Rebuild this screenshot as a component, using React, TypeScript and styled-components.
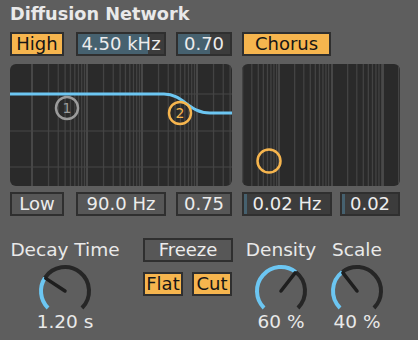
import styled, { createGlobalStyle } from "styled-components";

const Global = createGlobalStyle`
  body {
    margin: 0;
    background: #5e5e5e;
  }
`;

const ORANGE = "#f6b54e";
const BLUE = "#6cc6f2";

const Root = styled.div`
  width: 418px;
  height: 340px;
  box-sizing: border-box;
  padding: 2px 10px 0;
  background: #5e5e5e;
  font-family: "DejaVu Sans", "Liberation Sans", sans-serif;
  color: #e9e9e9;
  overflow: hidden;
`;

const Title = styled.div`
  font-size: 17.7px;
  font-weight: bold;
  line-height: 24px;
  height: 24px;
`;

const Main = styled.div`
  display: flex;
  gap: 10px;
  margin-top: 6px;
`;

const Column = styled.div<{ $w: number }>`
  width: ${(p) => p.$w}px;
  display: flex;
  flex-direction: column;
`;

const Row = styled.div<{ $gap?: number }>`
  display: flex;
  gap: ${(p) => p.$gap ?? 10}px;
  height: 24px;
`;

const Box = styled.div<{ $w: number; $on?: boolean; $fill?: number }>`
  width: ${(p) => p.$w}px;
  height: 24px;
  box-sizing: border-box;
  border: 2px solid #2f2f2f;
  font-size: 18px;
  line-height: 20px;
  text-align: center;
  white-space: nowrap;
  color: ${(p) => (p.$on ? "#161616" : "#ececec")};
  background: ${(p) =>
    p.$on
      ? ORANGE
      : p.$fill !== undefined
      ? `linear-gradient(to right, #46616f ${p.$fill}%, #3c3c3c ${p.$fill}%)`
      : "#575757"};
`;

const Graph = styled.div<{ $h: number }>`
  margin-top: 8px;
  height: ${(p) => p.$h}px;
  border-radius: 6px;
  overflow: hidden;
  background: #2a2a2a;
  svg {
    display: block;
  }
`;

const Bottom = styled.div`
  display: flex;
  margin-top: 22px;
`;

const KnobGroup = styled.div<{ $w: number; $ml: number }>`
  width: ${(p) => p.$w}px;
  margin-left: ${(p) => p.$ml}px;
  display: flex;
  flex-direction: column;
  align-items: center;
  padding-top: 1px;
`;

const Label = styled.div`
  font-size: 18.5px;
  line-height: 22px;
  white-space: nowrap;
`;

const Value = styled.div`
  font-size: 18.5px;
  line-height: 22px;
  margin-top: -8px;
  white-space: nowrap;
`;

const KnobSvg = styled.svg`
  margin-top: 2px;
  display: block;
`;

const SwitchCol = styled.div`
  margin-left: 23px;
  width: 90px;
  display: flex;
  flex-direction: column;
  gap: 10px;
`;

function logLines(width: number, majors: number[], decade: number) {
  const lines: { x: number; major: boolean }[] = [];
  const starts = [majors[0] - decade, ...majors];
  starts.forEach((m) => {
    for (let k = 1; k <= 9; k++) {
      const x = m + Math.log10(k) * decade;
      if (x > 0 && x < width) lines.push({ x, major: k === 1 });
    }
  });
  return lines;
}

const pt = (cx: number, cy: number, r: number, deg: number) => {
  const a = (deg * Math.PI) / 180;
  return [cx + r * Math.cos(a), cy - r * Math.sin(a)];
};

function Knob({ value }: { value: number }) {
  const c = 28;
  const r = 24;
  const start = 225;
  const end = -45;
  const va = start - 270 * value;
  const [sx, sy] = pt(c, c, r, start);
  const [vx, vy] = pt(c, c, r, va);
  const [ex, ey] = pt(c, c, r, end);
  const [nx, ny] = pt(c, c, r - 1, va);
  const big1 = 270 * value > 180 ? 1 : 0;
  const big2 = 270 * (1 - value) > 180 ? 1 : 0;
  return (
    <KnobSvg width={56} height={56} viewBox="0 0 56 56">
      <path
        d={`M${vx} ${vy} A${r} ${r} 0 ${big2} 1 ${ex} ${ey}`}
        fill="none"
        stroke="#262626"
        strokeWidth={4}
      />
      <path
        d={`M${sx} ${sy} A${r} ${r} 0 ${big1} 1 ${vx} ${vy}`}
        fill="none"
        stroke={BLUE}
        strokeWidth={4}
      />
      <line
        x1={c}
        y1={c}
        x2={nx}
        y2={ny}
        stroke="#1e1e1e"
        strokeWidth={3.5}
        strokeLinecap="round"
      />
    </KnobSvg>
  );
}

function FilterGraph() {
  const w = 222;
  const h = 122;
  const lines = logLines(w, [77, 132, 187], 55);
  return (
    <svg width={w} height={h}>
      {lines.map((l, i) => (
        <line
          key={i}
          x1={l.x}
          x2={l.x}
          y1={0}
          y2={h}
          stroke={l.major ? "#585858" : "#434343"}
          strokeWidth={1.3}
        />
      ))}
      {[30, 67, 103].map((y) => (
        <line key={y} x1={0} x2={w} y1={y} y2={y} stroke="#474747" strokeWidth={1.2} />
      ))}
      <path
        d="M0 30 H154 C174 30 178 49 200 49 H222"
        fill="none"
        stroke={BLUE}
        strokeWidth={3}
      />
      <circle cx={57} cy={44} r={11} fill="none" stroke="#9b9b9b" strokeWidth={2.5} />
      <text
        x={57}
        y={49}
        textAnchor="middle"
        fontSize={14}
        fontFamily="DejaVu Sans, sans-serif"
        fill="#9b9b9b"
      >
        1
      </text>
      <circle cx={170} cy={49} r={11} fill="none" stroke={ORANGE} strokeWidth={2.5} />
      <text
        x={170}
        y={54}
        textAnchor="middle"
        fontSize={14}
        fontFamily="DejaVu Sans, sans-serif"
        fill={ORANGE}
      >
        2
      </text>
    </svg>
  );
}

function ChorusGraph() {
  const w = 158;
  const h = 122;
  const lines = logLines(w, [37, 90, 141], 52);
  return (
    <svg width={w} height={h}>
      {lines.map((l, i) => (
        <line
          key={i}
          x1={l.x}
          x2={l.x}
          y1={0}
          y2={h}
          stroke={l.major ? "#585858" : "#434343"}
          strokeWidth={1.3}
        />
      ))}
      <circle cx={27} cy={97} r={11.5} fill="none" stroke={ORANGE} strokeWidth={2.5} />
    </svg>
  );
}

export default function App() {
  return (
    <Root>
      <Global />
      <Title>Diffusion Network</Title>
      <Main>
        <Column $w={222}>
          <Row>
            <Box $w={54} $on>
              High
            </Box>
            <Box $w={90} $fill={81} style={{ marginLeft: 2 }}>
              4.50 kHz
            </Box>
            <Box $w={56} $fill={62}>
              0.70
            </Box>
          </Row>
          <Graph $h={122}>
            <FilterGraph />
          </Graph>
          <Row style={{ marginTop: 6 }}>
            <Box $w={54}>Low</Box>
            <Box $w={90} style={{ marginLeft: 2 }}>
              90.0 Hz
            </Box>
            <Box $w={56}>0.75</Box>
          </Row>
        </Column>
        <Column $w={158}>
          <Row>
            <Box $w={89} $on>
              Chorus
            </Box>
          </Row>
          <Graph $h={122}>
            <ChorusGraph />
          </Graph>
          <Row $gap={8} style={{ marginTop: 6 }}>
            <Box $w={90} $fill={4}>
              0.02 Hz
            </Box>
            <Box $w={60} $fill={5}>
              0.02
            </Box>
          </Row>
        </Column>
      </Main>
      <Bottom>
        <KnobGroup $w={110} $ml={0}>
          <Label>Decay Time</Label>
          <Knob value={0.29} />
          <Value>1.20 s</Value>
        </KnobGroup>
        <SwitchCol>
          <Box $w={90}>Freeze</Box>
          <Row $gap={9}>
            <Box $w={40} $on>
              Flat
            </Box>
            <Box $w={40} $on>
              Cut
            </Box>
          </Row>
        </SwitchCol>
        <KnobGroup $w={76} $ml={10}>
          <Label>Density</Label>
          <Knob value={0.64} />
          <Value>60 %</Value>
        </KnobGroup>
        <KnobGroup $w={60} $ml={8}>
          <Label>Scale</Label>
          <Knob value={0.36} />
          <Value>40 %</Value>
        </KnobGroup>
      </Bottom>
    </Root>
  );
}
